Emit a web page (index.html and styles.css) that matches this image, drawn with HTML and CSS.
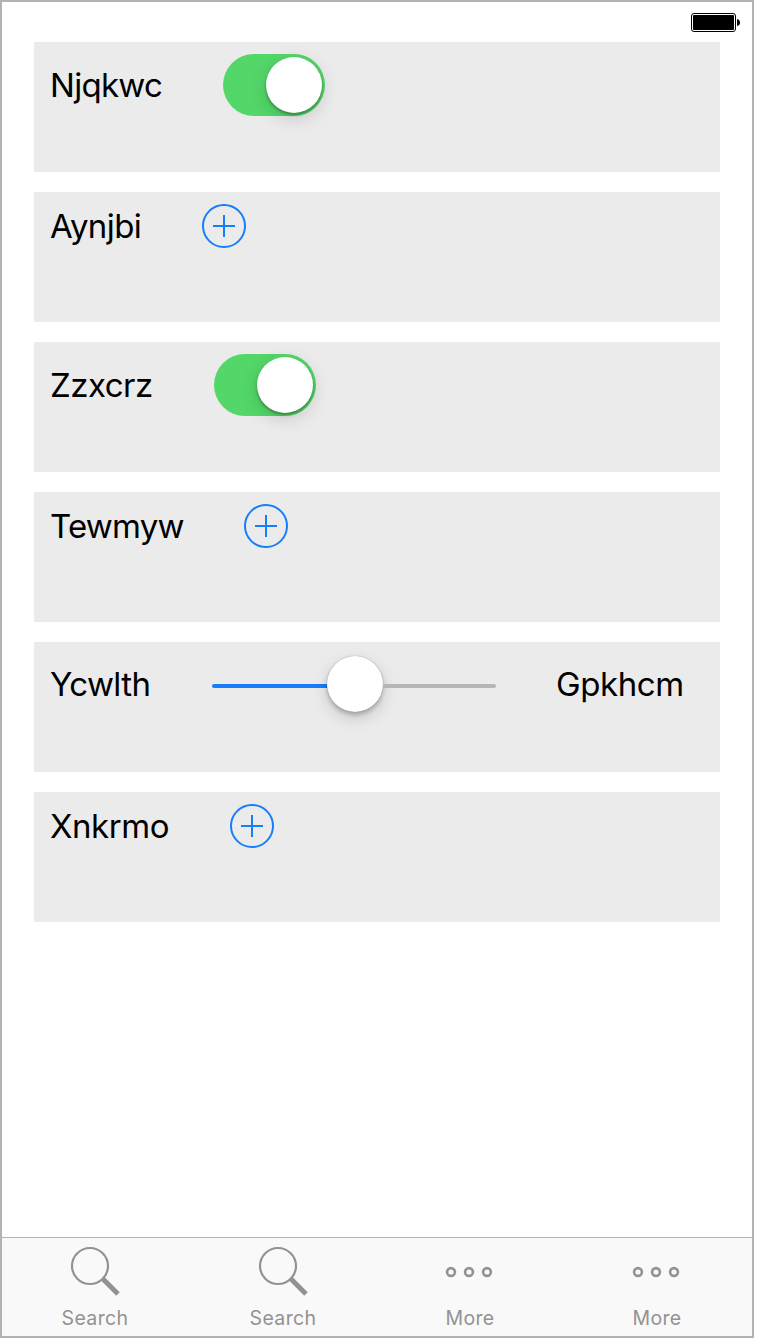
FILE: index.html
```html
<!DOCTYPE html>
<html lang="en">
<head>
<meta charset="utf-8">
<title>Settings</title>
<link rel="stylesheet" href="styles.css">
</head>
<body>
<div class="phone">
  <header class="status-bar">
    <svg class="battery" width="50" height="20" viewBox="0 0 50 20">
      <rect x="0.5" y="0.5" width="44" height="18" rx="2.5" fill="#fff" stroke="#000" stroke-width="1"/>
      <rect x="2" y="2" width="41" height="15" rx="1" fill="#000"/>
      <path d="M46 6 Q49 6.500 49 9.500 Q49 12.500 46 13Z" fill="#000"/>
    </svg>
  </header>
  <main class="rows">
    <section class="row">
      <span class="label label-njqkwc">Njqkwc</span>
      <span class="switch"><span class="knob"></span></span>
    </section>
    <section class="row">
      <span class="label label-aynjbi">Aynjbi</span>
      <svg class="add" width="44" height="44" viewBox="0 0 44 44"><circle cx="22" cy="22" r="21"/><path d="M11 22H33M22 11V33"/></svg>
    </section>
    <section class="row">
      <span class="label label-zzxcrz">Zzxcrz</span>
      <span class="switch"><span class="knob"></span></span>
    </section>
    <section class="row">
      <span class="label label-tewmyw">Tewmyw</span>
      <svg class="add" width="44" height="44" viewBox="0 0 44 44"><circle cx="22" cy="22" r="21"/><path d="M11 22H33M22 11V33"/></svg>
    </section>
    <section class="row">
      <span class="label label-ycwlth">Ycwlth</span>
      <span class="slider"><span class="track-on"></span><span class="thumb"></span><span class="track-off"></span></span>
      <span class="label label-gpkhcm">Gpkhcm</span>
    </section>
    <section class="row">
      <span class="label label-xnkrmo">Xnkrmo</span>
      <svg class="add" width="44" height="44" viewBox="0 0 44 44"><circle cx="22" cy="22" r="21"/><path d="M11 22H33M22 11V33"/></svg>
    </section>
  </main>
  <nav class="tabs">
    <div class="tab">
      <svg class="tab-icon" width="50" height="50" viewBox="0 0 50 50"><circle cx="20" cy="20" r="18"/><path class="handle" d="M33 33L48 48"/></svg>
      <span class="tab-name">Search</span>
    </div>
    <div class="tab">
      <svg class="tab-icon" width="50" height="50" viewBox="0 0 50 50"><circle cx="20" cy="20" r="18"/><path class="handle" d="M33 33L48 48"/></svg>
      <span class="tab-name">Search</span>
    </div>
    <div class="tab">
      <svg class="tab-icon dots" width="50" height="50" viewBox="0 0 50 50"><circle cx="6" cy="26" r="3.900"/><circle cx="24" cy="26" r="3.900"/><circle cx="42" cy="26" r="3.900"/></svg>
      <span class="tab-name">More</span>
    </div>
    <div class="tab">
      <svg class="tab-icon dots" width="50" height="50" viewBox="0 0 50 50"><circle cx="6" cy="26" r="3.900"/><circle cx="24" cy="26" r="3.900"/><circle cx="42" cy="26" r="3.900"/></svg>
      <span class="tab-name">More</span>
    </div>
  </nav>
</div>
</body>
</html>
```
FILE: styles.css
```css
body {
  margin: 0;
  background: #fff;
  font-family: Inter, "Liberation Sans", sans-serif;
}
.phone {
  box-sizing: border-box;
  width: 754px;
  height: 1338px;
  border: 2px solid #b3b3b3;
  display: flex;
  flex-direction: column;
}
.status-bar {
  box-sizing: border-box;
  height: 40px;
  padding: 11px 11px 0 0;
  display: flex;
  justify-content: flex-end;
  align-items: flex-start;
}
.rows {
  flex: 1;
  display: flex;
  flex-direction: column;
  gap: 20px;
  padding: 0 32px;
}
.row {
  box-sizing: border-box;
  height: 130px;
  padding: 12px 16px;
  background: #ebebeb;
  display: flex;
  align-items: center;
  align-content: flex-start;
  flex-wrap: wrap;
  column-gap: 60px;
}
.label {
  font-size: 33px;
  line-height: 41px;
  color: #000;
  white-space: nowrap;
}
.label-njqkwc { width: 113px; letter-spacing: -0.700px; }
.label-aynjbi { width: 92px; letter-spacing: -0.600px; }
.label-zzxcrz { width: 104px; letter-spacing: -0.500px; }
.label-tewmyw { width: 134px; letter-spacing: -0.750px; }
.label-ycwlth { width: 102px; letter-spacing: -0.600px; }
.label-gpkhcm { width: 130px; letter-spacing: -0.400px; }
.label-xnkrmo { width: 120px; letter-spacing: -0.450px; }
.switch {
  box-sizing: border-box;
  width: 102px;
  height: 62px;
  padding: 3px;
  border-radius: 31px;
  background: #53d769;
  display: flex;
  justify-content: flex-end;
}
.knob {
  width: 56px;
  height: 56px;
  border-radius: 50%;
  background: #fff;
  box-shadow: 0 2px 3px rgba(0, 0, 0, 0.3), 0 5px 18px rgba(0, 0, 0, 0.16);
}
.slider {
  width: 284px;
  height: 60px;
  display: flex;
  align-items: center;
}
.track-on, .track-off {
  height: 4px;
  margin-top: 4px;
  background: #157efb;
  border-radius: 2px 0 0 2px;
}
.track-on { width: 115px; }
.track-off {
  flex: 1;
  background: #b6b6b6;
  border-radius: 0 2px 2px 0;
}
.thumb {
  width: 56px;
  height: 56px;
  border-radius: 50%;
  background: #fff;
  box-shadow: 0 0 1px rgba(0, 0, 0, 0.4), 0 3px 4px rgba(0, 0, 0, 0.2), 0 6px 16px rgba(0, 0, 0, 0.16);
}
.add {
  fill: none;
  stroke: #157efb;
  stroke-width: 2;
}
.tabs {
  box-sizing: border-box;
  height: 99px;
  border-top: 1px solid #b2b2b2;
  background: #f9f9f9;
  display: grid;
  grid-template-columns: 186px 190px 184px 190px;
}
.tab {
  display: flex;
  flex-direction: column;
  align-items: center;
  padding-top: 8px;
}
.tab-icon {
  fill: none;
  stroke: #929292;
  stroke-width: 2.200;
}
.handle { stroke-width: 5; }
.dots { stroke-width: 2.600; }
.tab-name {
  margin-top: 10px;
  font-size: 19.500px;
  line-height: 24px;
  letter-spacing: 0.350px;
  color: #929292;
}
```
